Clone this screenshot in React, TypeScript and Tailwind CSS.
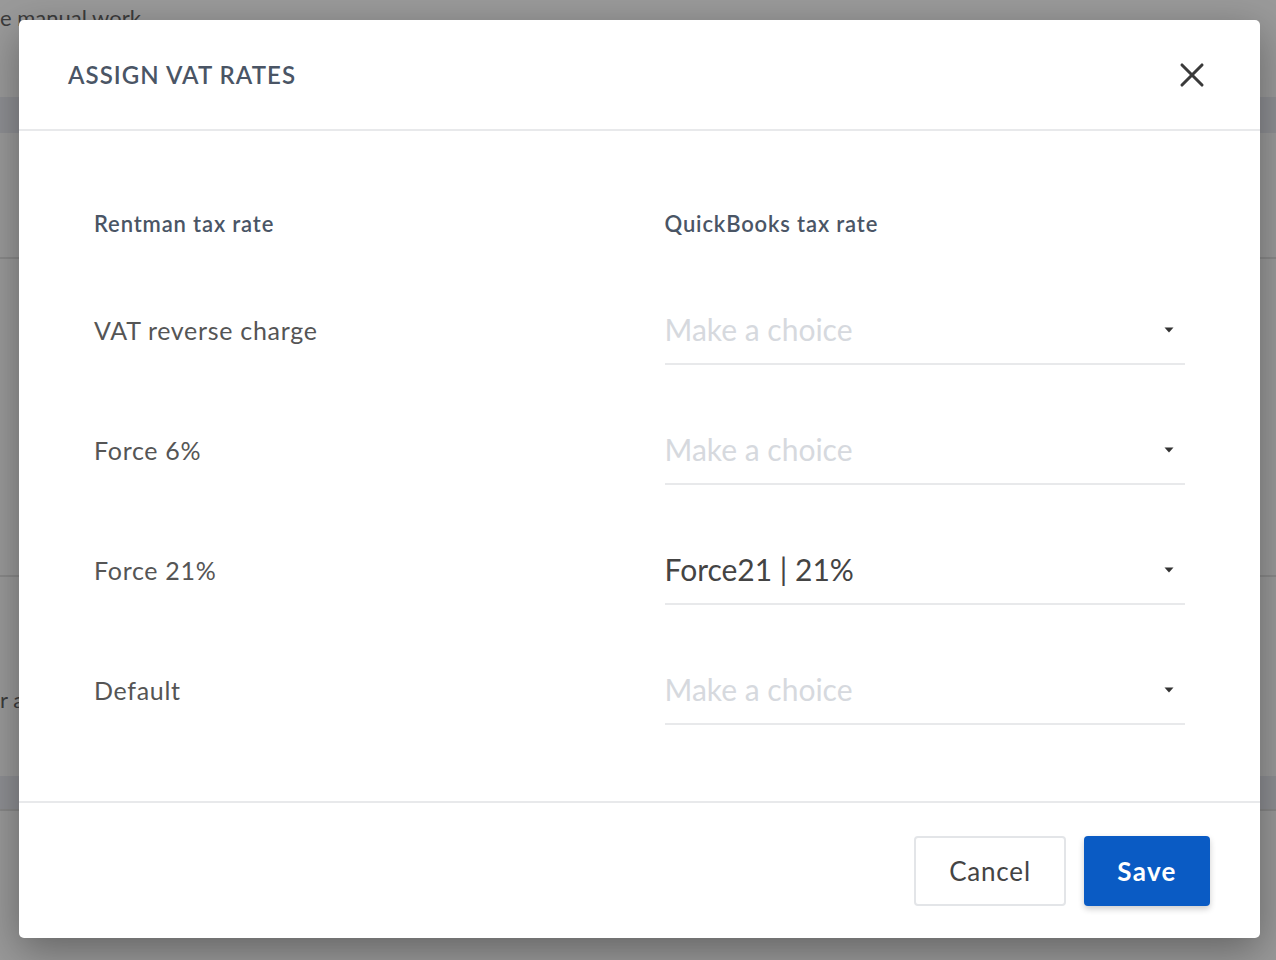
import { X } from "lucide-react";

const rows = [
  { label: "VAT reverse charge", value: "" },
  { label: "Force 6%", value: "" },
  { label: "Force 21%", value: "Force21 | 21%" },
  { label: "Default", value: "" },
];

function Caret() {
  return (
    <svg width="10" height="6" viewBox="0 0 10 6" className="shrink-0">
      <path d="M0.5 0.5h9L5 5.5z" fill="#333" />
    </svg>
  );
}

function SelectField({ value }: { value: string }) {
  return (
    <div className="flex h-[69px] items-center justify-between border-b-2 border-[#e8e9eb] pr-[11px]">
      {value ? (
        <span className="text-[30px] text-[#444]">{value}</span>
      ) : (
        <span className="text-[30px] text-[#d6d9de]">Make a choice</span>
      )}
      <Caret />
    </div>
  );
}

function Backdrop() {
  return (
    <div className="flex h-full flex-col bg-[#9a9a9a]">
      <div className="h-[97px] text-[22px] leading-[36px] text-[#3c3c3c]">
        e manual work
      </div>
      <div className="h-[36px] bg-[#8e8f93]" />
      <div className="h-[126px] border-b-2 border-[#8a8a8a]" />
      <div className="h-[318px] border-b-2 border-[#8a8a8a]" />
      <div className="flex h-[199px] items-end pb-[60px] text-[22px] text-[#3c3c3c]">
        r a
      </div>
      <div className="h-[35px] border-b-2 border-[#888] bg-[#8e8f93]" />
      <div className="flex-1 bg-[#999]" />
    </div>
  );
}

export default function App() {
  return (
    <div
      className="relative h-[960px] w-[1276px] overflow-hidden"
      style={{ fontFamily: "Lato, 'Noto Sans', sans-serif" }}
    >
      <Backdrop />
      <div className="absolute left-[19px] top-[20px] flex w-[1241px] flex-col rounded-[5px] bg-white shadow-[0_12px_40px_rgba(0,0,0,0.35)]">
        <div className="flex h-[111px] items-center justify-between border-b-2 border-[#e8e9eb] pl-[49px] pr-[48px]">
          <h2 className="text-[24px] font-semibold uppercase tracking-[1.05px] text-[#4a5565]">
            Assign VAT rates
          </h2>
          <X className="h-[40px] w-[40px] text-[#3a3a3a]" strokeWidth={1.85} />
        </div>

        <div className="grid grid-cols-2 gap-x-[50px] px-[75px] pt-[81px] pb-[76px]">
          <div className="mb-[60px] text-[22px] font-semibold leading-[24px] tracking-[0.85px] text-[#4a5565]">
            Rentman tax rate
          </div>
          <div className="mb-[60px] text-[22px] font-semibold leading-[24px] tracking-[0.85px] text-[#4a5565]">
            QuickBooks tax rate
          </div>
          {rows.map((r, i) => (
            <div key={r.label} className="contents">
              <div
                className={
                  "flex h-[69px] items-center text-[25px] tracking-[0.7px] text-[#555] " +
                  (i < rows.length - 1 ? "mb-[51px]" : "")
                }
              >
                {r.label}
              </div>
              <div className={i < rows.length - 1 ? "mb-[51px]" : ""}>
                <SelectField value={r.value} />
              </div>
            </div>
          ))}
        </div>

        <div className="flex justify-end gap-[18px] border-t-2 border-[#e8e9eb] pt-[33px] pb-[32px] pr-[50px]">
          <button className="h-[70px] w-[152px] rounded-[4px] border-2 border-[#e3e5e8] bg-white text-[26px] tracking-[0.8px] text-[#444]">
            Cancel
          </button>
          <button className="h-[70px] w-[126px] rounded-[4px] bg-[#0a5bc4] text-[26px] font-bold tracking-[1.3px] text-white shadow-[0_3px_6px_rgba(0,0,0,0.2)]">
            Save
          </button>
        </div>
      </div>
    </div>
  );
}
